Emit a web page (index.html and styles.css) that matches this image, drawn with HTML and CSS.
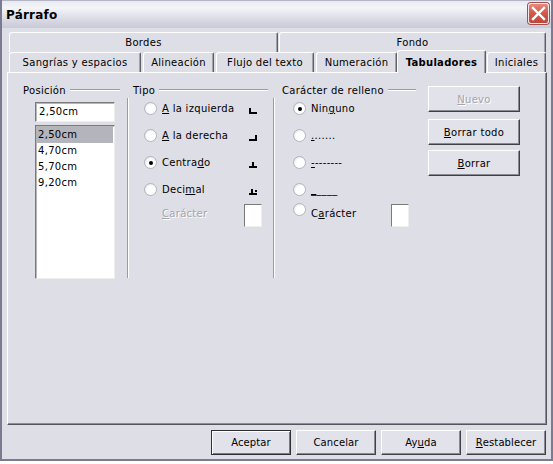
FILE: index.html
```html
<!DOCTYPE html>
<html lang="es">
<head>
<meta charset="utf-8">
<title>Párrafo</title>
<link rel="stylesheet" href="styles.css">
</head>
<body>
<div class="window">
  <div class="titlebar">
    <span class="title">Párrafo</span>
    <span class="close"><svg width="15" height="15" viewBox="0 0 15 15"><path d="M2 2 L13 13 M13 2 L2 13" stroke="#fff" stroke-width="2.4" stroke-linecap="square"/></svg></span>
  </div>
  <div class="tabs">
    <div class="tabrow">
      <div class="tab w-bordes">Bordes</div>
      <div class="tab w-fondo">Fondo</div>
    </div>
    <div class="tabrow">
      <div class="tab w-sang">Sangrías y espacios</div>
      <div class="tab w-alin">Alineación</div>
      <div class="tab w-flujo">Flujo del texto</div>
      <div class="tab w-num">Numeración</div>
      <div class="tab w-tab active">Tabuladores</div>
      <div class="tab w-ini">Iniciales</div>
    </div>
  </div>
  <div class="panel">
    <div class="group g-pos">
      <div class="ghead"><span>Posición</span><i class="rule"></i></div>
      <div class="field">2,50cm</div>
      <div class="listbox">
        <div class="item sel">2,50cm</div>
        <div class="item">4,70cm</div>
        <div class="item">5,70cm</div>
        <div class="item">9,20cm</div>
      </div>
    </div>
    <div class="group g-tipo">
      <div class="ghead"><span>Tipo</span><i class="rule"></i></div>
      <div class="gbody">
        <div class="row"><span class="radio"></span><span class="lbl"><u>A</u> la izquierda</span>
          <svg class="tabicon" width="8" height="6" viewBox="0 0 8 6" shape-rendering="crispEdges"><rect x="0" y="0" width="2" height="6"/><rect x="0" y="4" width="8" height="2"/></svg></div>
        <div class="row"><span class="radio"></span><span class="lbl"><u>A</u> la derecha</span>
          <svg class="tabicon" width="8" height="6" viewBox="0 0 8 6" shape-rendering="crispEdges"><rect x="6" y="0" width="2" height="6"/><rect x="0" y="4" width="8" height="2"/></svg></div>
        <div class="row"><span class="radio on"></span><span class="lbl">Centra<u>d</u>o</span>
          <svg class="tabicon" width="8" height="6" viewBox="0 0 8 6" shape-rendering="crispEdges"><rect x="3" y="0" width="2" height="6"/><rect x="0" y="4" width="8" height="2"/></svg></div>
        <div class="row"><span class="radio"></span><span class="lbl">Deci<u>m</u>al</span>
          <svg class="tabicon" width="8" height="6" viewBox="0 0 8 6" shape-rendering="crispEdges"><rect x="2" y="0" width="2" height="6"/><rect x="0" y="4" width="6" height="2"/><rect x="6" y="1" width="2" height="2"/><rect x="6" y="4" width="2" height="2"/></svg></div>
        <div class="row last"><span class="lbl disabled indent"><u>C</u>arácter</span><span class="charbox tipo-box"></span></div>
      </div>
    </div>
    <div class="group g-fill">
      <div class="ghead"><span>Carácter de relleno</span><i class="rule"></i></div>
      <div class="gbody">
        <div class="row"><span class="radio on"></span><span class="lbl">Nin<u>g</u>uno</span></div>
        <div class="row"><span class="radio"></span><span class="lbl dots"><u>.</u>......</span></div>
        <div class="row"><span class="radio"></span><span class="lbl"><u>-</u>-------</span></div>
        <div class="row"><span class="radio"></span><span class="lbl"><u>_</u>____</span></div>
        <div class="row last"><span class="radio"></span><span class="lbl">C<u>a</u>rácter</span><span class="charbox fill-box"></span></div>
      </div>
    </div>
    <div class="side">
      <div class="btn disabled-btn"><u>N</u>uevo</div>
      <div class="btn b2"><u>B</u>orrar todo</div>
      <div class="btn b3"><u>B</u>orrar</div>
    </div>
  </div>
  <div class="footer">
    <div class="btn fbtn default">Aceptar</div>
    <div class="btn fbtn">Cancelar</div>
    <div class="btn fbtn">Ay<u>u</u>da</div>
    <div class="btn fbtn"><u>R</u>establecer</div>
  </div>
</div>
</body>
</html>
```

FILE: styles.css
```css
html, body {
  margin: 0;
  padding: 0;
  background: #ffffff;
}
body {
  font-family: "DejaVu Sans", sans-serif;
  font-size: 10px;
  letter-spacing: 0.3px;
  color: #000;
}
.window {
  width: 553px;
  height: 461px;
  box-sizing: border-box;
  background: #dedee6;
  border-left: 2px solid #7a7a90;
  border-right: 2px solid #7a7a90;
  border-bottom: 2px solid #7a7a90;
  display: flex;
  flex-direction: column;
}
.titlebar {
  height: 28px;
  box-sizing: border-box;
  border-top: 1px solid #b4b5c4;
  background: linear-gradient(to bottom, #e9eaf1 0%, #f4f5f8 25%, #d8d9e3 70%, #c9cad7 100%);
  display: flex;
  align-items: center;
  padding-left: 4px;
  padding-right: 2px;
}
.title {
  font-weight: bold;
  font-size: 12px;
  letter-spacing: 0.2px;
  flex: 1;
}
.close {
  width: 21px;
  height: 21px;
  box-sizing: border-box;
  border: 1px solid #f4e8e8;
  border-radius: 3px;
  background: linear-gradient(to bottom, #e88a7e 0%, #d45a4c 45%, #c0463a 100%);
  display: flex;
  align-items: center;
  justify-content: center;
  margin-top: -2px;
  box-shadow: 0 0 0 1px #a05050;
}
.tabs {
  padding: 4px 0 0 7px;
}
.tabrow {
  display: flex;
  height: 20px;
}
.tab {
  box-sizing: border-box;
  height: 20px;
  border-top: 1px solid #ffffff;
  border-left: 1px solid #ffffff;
  border-right: 1px solid #5e5e66;
  border-top-left-radius: 3px;
  border-top-right-radius: 2px;
  box-shadow: inset -1px 0 #a2a2ac;
  text-align: center;
  line-height: 19px;
  background: #dedee6;
  white-space: nowrap;
}
.w-bordes { width: 269px; margin-right: 1px; }
.w-fondo { width: 267px; }
.w-sang { width: 132px; margin-right: 2px; }
.w-alin { width: 71px; margin-right: 2px; }
.w-flujo { width: 98px; margin-right: 2px; }
.w-num { width: 81px; }
.w-tab { width: 89px; margin-right: 1px; }
.w-ini { width: 59px; }
.tab.active {
  height: 23px;
  margin-top: -2px;
  font-weight: bold;
  position: relative;
  z-index: 1;
  line-height: 23px;
}
.panel {
  margin-left: 5px;
  width: 540px;
  height: 353px;
  box-sizing: border-box;
  border-top: 1px solid #ffffff;
  border-left: 1px solid #ffffff;
  border-right: 1px solid #55555c;
  border-bottom: 1px solid #55555c;
  box-shadow: inset -1px -1px #8c8c94;
  display: flex;
  align-items: flex-start;
  padding-top: 10px;
}
.group {
  box-sizing: border-box;
  display: flex;
  flex-direction: column;
}
.ghead {
  height: 14px;
  display: flex;
  align-items: center;
  white-space: nowrap;
}
.rule {
  flex: 1;
  height: 0;
  border-top: 1px solid #9a9aa4;
  border-bottom: 1px solid #ffffff;
  margin-left: 4px;
}
.g-pos {
  width: 119px;
  padding-left: 15px;
  padding-right: 7px;
}
.field {
  margin-top: 5px;
  margin-left: 12px;
  width: 80px;
  height: 20px;
  box-sizing: border-box;
  background: #ffffff;
  border-top: 1px solid #7a7a7a;
  border-left: 1px solid #7a7a7a;
  border-right: 1px solid #eeeeee;
  border-bottom: 1px solid #eeeeee;
  box-shadow: inset 1px 1px #b6b6b6;
  padding-left: 3px;
  line-height: 18px;
}
.listbox {
  margin-top: 3px;
  margin-left: 12px;
  width: 80px;
  height: 154px;
  box-sizing: border-box;
  background: #ffffff;
  border-top: 1px solid #7a7a7a;
  border-left: 1px solid #7a7a7a;
  border-right: 1px solid #eeeeee;
  border-bottom: 1px solid #eeeeee;
  box-shadow: inset 1px 1px #b6b6b6;
  padding: 1px 1px 0 1px;
}
.item {
  height: 16px;
  line-height: 16px;
  padding-left: 1px;
}
.item.sel {
  background: #b4b4bc;
}
.g-tipo {
  width: 146px;
}
.g-tipo .ghead {
  padding-left: 6px;
  padding-right: 5px;
}
.g-fill {
  width: 155px;
}
.g-fill .ghead {
  padding-left: 9px;
  padding-right: 12px;
}
.gbody {
  margin-top: 1px;
  height: 180px;
  box-sizing: border-box;
  border-left: 1px solid #9a9aa4;
  box-shadow: inset 1px 0 #ffffff;
  display: flex;
  flex-direction: column;
  gap: 6px;
  padding-left: 16px;
}
.g-tipo .gbody {
  padding-right: 11px;
}
.g-fill .gbody {
  padding-left: 19px;
  padding-right: 19px;
}
.row {
  height: 21px;
  display: flex;
  align-items: center;
  white-space: nowrap;
}
.row.last {
  margin-top: -3px;
  align-items: flex-start;
}
.row.last .lbl {
  line-height: 21px;
}
.radio {
  width: 13px;
  height: 13px;
  box-sizing: border-box;
  border-radius: 50%;
  border: 1px solid #b4b4be;
  background: radial-gradient(circle at 60% 60%, #ffffff 50%, #e2e2e8 80%, #c8c8d0 100%);
  display: flex;
  align-items: center;
  justify-content: center;
  margin-right: 5px;
  flex: none;
}
.radio.on::after {
  content: "";
  width: 4px;
  height: 4px;
  border-radius: 50%;
  background: #000;
}
.lbl {
  flex: 1;
}
.lbl.indent {
  padding-left: 18px;
}
.disabled, .disabled-btn {
  color: #a4a4ac;
  text-shadow: 1px 1px 0 #ffffff;
}
.tabicon {
  fill: #000;
  flex: none;
  width: 8px;
  height: 6px;
  margin-right: 5px;
  margin-top: 5px;
}
.charbox {
  width: 18px;
  height: 23px;
  box-sizing: border-box;
  background: #ffffff;
  border-top: 1px solid #7a7a7a;
  border-left: 1px solid #7a7a7a;
  border-right: 1px solid #eeeeee;
  border-bottom: 1px solid #eeeeee;
  margin-top: 1px;
  flex: none;
}
.side {
  margin-top: 3px;
  display: flex;
  flex-direction: column;
  width: 92px;
}
.btn {
  box-sizing: border-box;
  height: 26px;
  border-top: 1px solid #ffffff;
  border-left: 1px solid #ffffff;
  border-right: 1px solid #404046;
  border-bottom: 1px solid #404046;
  box-shadow: inset -1px -1px #8a8a92;
  background: #e2e2ea;
  display: flex;
  align-items: center;
  justify-content: center;
  white-space: nowrap;
}
.b2 { margin-top: 7px; }
.b3 { margin-top: 5px; }
.footer {
  margin-top: 5px;
  display: flex;
  justify-content: flex-end;
  gap: 5px;
  padding-right: 5px;
}
.fbtn {
  width: 80px;
  height: 25px;
  letter-spacing: 0.1px;
}
.fbtn.default {
  border: 1px solid #2e2e34;
  box-shadow: inset 1px 1px #ffffff, inset -1px -1px #7a7a82;
}
u {
  text-decoration: underline;
  text-underline-offset: 1px;
}
```
